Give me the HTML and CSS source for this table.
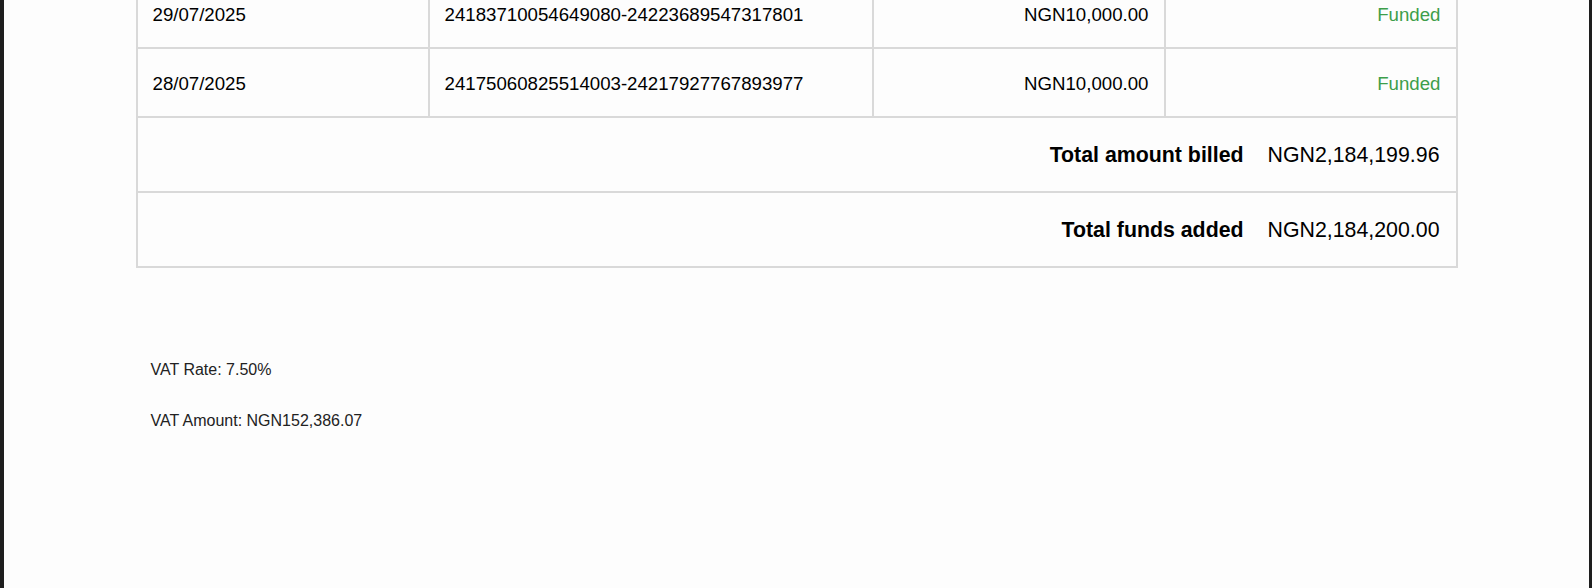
FILE: index.html
```html
<!DOCTYPE html>
<html>
<head>
    <meta charset="UTF-8">
    <meta name="viewport" content="width=device-width, initial-scale=1.0">
    <title>Funding Statement</title>
    <link rel="stylesheet" href="styles.css">
</head>
<body>
    <div class="page">
        <div class="statement">
            <table class="funding">
                <colgroup>
                    <col class="col-date">
                    <col class="col-ref">
                    <col class="col-amount">
                    <col class="col-status">
                </colgroup>
                <tbody>
                    <tr class="entry">
                        <td>29/07/2025</td>
                        <td>24183710054649080-24223689547317801</td>
                        <td class="num">NGN10,000.00</td>
                        <td class="status">Funded</td>
                    </tr>
                    <tr class="entry">
                        <td>28/07/2025</td>
                        <td>24175060825514003-24217927767893977</td>
                        <td class="num">NGN10,000.00</td>
                        <td class="status">Funded</td>
                    </tr>
                    <tr class="total">
                        <td colspan="4">
                            <div class="total-line">
                                <span class="total-label">Total amount billed</span>
                                <span class="total-value">NGN2,184,199.96</span>
                            </div>
                        </td>
                    </tr>
                    <tr class="total">
                        <td colspan="4">
                            <div class="total-line">
                                <span class="total-label">Total funds added</span>
                                <span class="total-value">NGN2,184,200.00</span>
                            </div>
                        </td>
                    </tr>
                </tbody>
            </table>

            <div class="vat">
                <p>VAT Rate: 7.50%</p>
                <p>VAT Amount: NGN152,386.07</p>
            </div>
        </div>
    </div>
</body>
</html>
```

FILE: styles.css
```css
html, body {
    margin: 0;
    padding: 0;
    height: 100%;
    overflow: hidden;
}
body {
    font-family: "Liberation Sans", Arial, sans-serif;
    color: #000;
    background-color: #1e1e1e;
}
.page {
    margin: 0 3px 0 4px;
    min-height: 100%;
    background-color: #fdfdfd;
    overflow: hidden;
}
.statement {
    width: 1322px;
    margin: -22px auto 0;
}
.funding {
    width: 100%;
    border-collapse: collapse;
    table-layout: fixed;
    font-size: 18.67px;
}
.col-date { width: 292px; }
.col-ref { width: 444px; }
.col-amount { width: 292px; }
.col-status { width: 292px; }
.funding td {
    border: 2px solid #d9d9d9;
    padding: 2px 15px 0;
    vertical-align: middle;
    white-space: nowrap;
}
.entry td {
    height: 65px;
}
.num {
    text-align: right;
}
.status {
    text-align: right;
    color: #3d9e4a;
}
.total td {
    height: 71px;
    padding-right: 16px;
}
.total-line {
    display: flex;
    justify-content: flex-end;
    align-items: center;
    gap: 24px;
    font-size: 21.33px;
}
.total-label {
    font-weight: bold;
}
.vat {
    margin-top: 93px;
    padding-left: 15px;
    font-size: 16px;
    line-height: 18px;
    color: #222;
}
.vat p {
    margin: 0 0 33px;
}
```
